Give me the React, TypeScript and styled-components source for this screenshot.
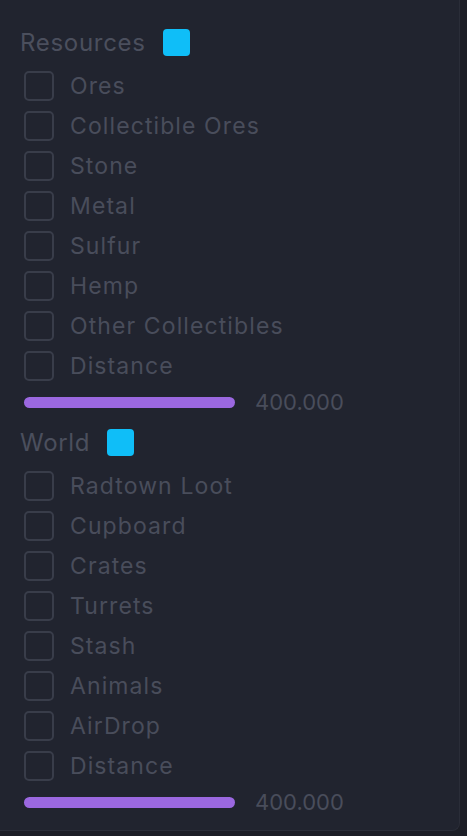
import React from "react";
import styled, { createGlobalStyle } from "styled-components";

const GlobalStyle = createGlobalStyle`
  html, body {
    margin: 0;
    padding: 0;
    background: #1c1e26;
  }
  body {
    font-family: Inter, "Noto Sans", sans-serif;
  }
`

const Panel = styled.div`
  box-sizing: border-box;
  width: 460px;
  height: 831px;
  padding: 26px 20px 12px;
  background: #21242f;
  border: 1px solid #2a2d38;
  border-top: none;
  border-left: none;
  border-radius: 0 0 8px 0;
  display: flex;
  flex-direction: column;
`

const Header = styled.div`
  display: flex;
  align-items: center;
  gap: 17px;
  height: 32px;
  margin-bottom: 8px;
  font-size: 24px;
  letter-spacing: 0.7px;
  color: #4b4f5d;
`

const ColorSwatch = styled.div<{ color: string }>`
  width: 27px;
  height: 27px;
  border-radius: 4px;
  background: ${({ color }) => color};
`

const Row = styled.label`
  display: flex;
  align-items: center;
  gap: 16px;
  height: 40px;
  margin-left: 4px;
  font-size: 23px;
  letter-spacing: 1.1px;
  color: #494d5b;
`

const Box = styled.span`
  box-sizing: border-box;
  width: 30px;
  height: 30px;
  border: 2px solid #393d4a;
  border-radius: 5px;
`

const SliderRow = styled.div`
  display: flex;
  align-items: center;
  gap: 20px;
  height: 32px;
  margin-left: 4px;
  font-size: 22px;
  color: #494d5b;
`

const Track = styled.div`
  width: 211px;
  height: 11px;
  border-radius: 6px;
  background: #9b68e0;
`

const Gap = styled.div`
  height: 8px;
`

type Section = {
  title: string
  items: string[]
  distance: string
}

const sections: Section[] = [
  {
    title: "Resources",
    items: ["Ores", "Collectible Ores", "Stone", "Metal", "Sulfur", "Hemp", "Other Collectibles", "Distance"],
    distance: "400.000",
  },
  {
    title: "World",
    items: ["Radtown Loot", "Cupboard", "Crates", "Turrets", "Stash", "Animals", "AirDrop", "Distance"],
    distance: "400.000",
  },
]

const SectionBlock: React.FC<{ section: Section }> = ({ section }) => (
  <>
    <Header>
      {section.title}
      <ColorSwatch color="#0fbef8" />
    </Header>
    {section.items.map((item, i) => (
      <Row key={i}>
        <Box />
        {item}
      </Row>
    ))}
    <SliderRow>
      <Track />
      {section.distance}
    </SliderRow>
  </>
)

export default function App() {
  return (
    <>
      <GlobalStyle />
      <Panel>
        <SectionBlock section={sections[0]} />
        <Gap />
        <SectionBlock section={sections[1]} />
      </Panel>
    </>
  )
}
